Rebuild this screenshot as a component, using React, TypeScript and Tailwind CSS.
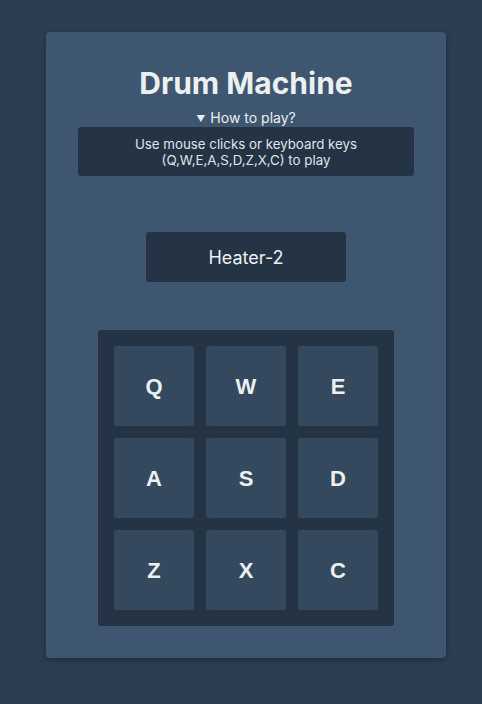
import React from "react";

const pads: string[] = ["Q", "W", "E", "A", "S", "D", "Z", "X", "C"];

function App() {
  return (
    <div
      className="min-h-[704px] w-full bg-[#2c3e50] pt-[32px] pl-[46px]"
      style={{ fontFamily: "Inter, 'Noto Sans', sans-serif" }}
    >
      <div className="w-[400px] h-[626px] rounded bg-[#3e5670] shadow-[0_2px_6px_rgba(0,0,0,0.3)] flex flex-col items-center pt-[33px]">
        <h1 className="text-[30px] leading-[36px] font-bold text-[#ecf0f1]">
          Drum Machine
        </h1>
        <details open className="mt-[7px] flex flex-col items-center">
          <summary className="h-[20px] text-[14px] leading-[20px] text-[#ecf0f1] text-center cursor-pointer list-none">
            <span className="text-[9px] mr-[5px] relative top-[-1px]">▼</span>
            How to play?
          </summary>
          <div className="mt-[-1px] w-[336px] h-[49px] rounded-[3px] bg-[#253445] text-[13.3px] leading-[16px] text-[#dfe4e8] text-center flex flex-col justify-center">
            <span>Use mouse clicks or keyboard keys</span>
            <span>(Q,W,E,A,S,D,Z,X,C) to play</span>
          </div>
        </details>
        <div className="mt-[56px] w-[200px] h-[50px] rounded-[3px] bg-[#253445] flex items-center justify-center text-[18px] text-[#ecf0f1]">
          Heater-2
        </div>
        <div className="mt-[48px] w-[296px] h-[296px] rounded-[3px] bg-[#253445] p-[16px] grid grid-cols-3 gap-[12px]">
          {pads.map((key) => (
            <button
              key={key}
              className="w-[80px] h-[80px] rounded-[3px] bg-[#34495e] text-[#ecf0f1] text-[22px] font-bold flex items-center justify-center"
              style={{ fontFamily: "'Liberation Sans', Arial, sans-serif" }}
            >
              {key}
            </button>
          ))}
        </div>
      </div>
    </div>
  );
}

export default App;
